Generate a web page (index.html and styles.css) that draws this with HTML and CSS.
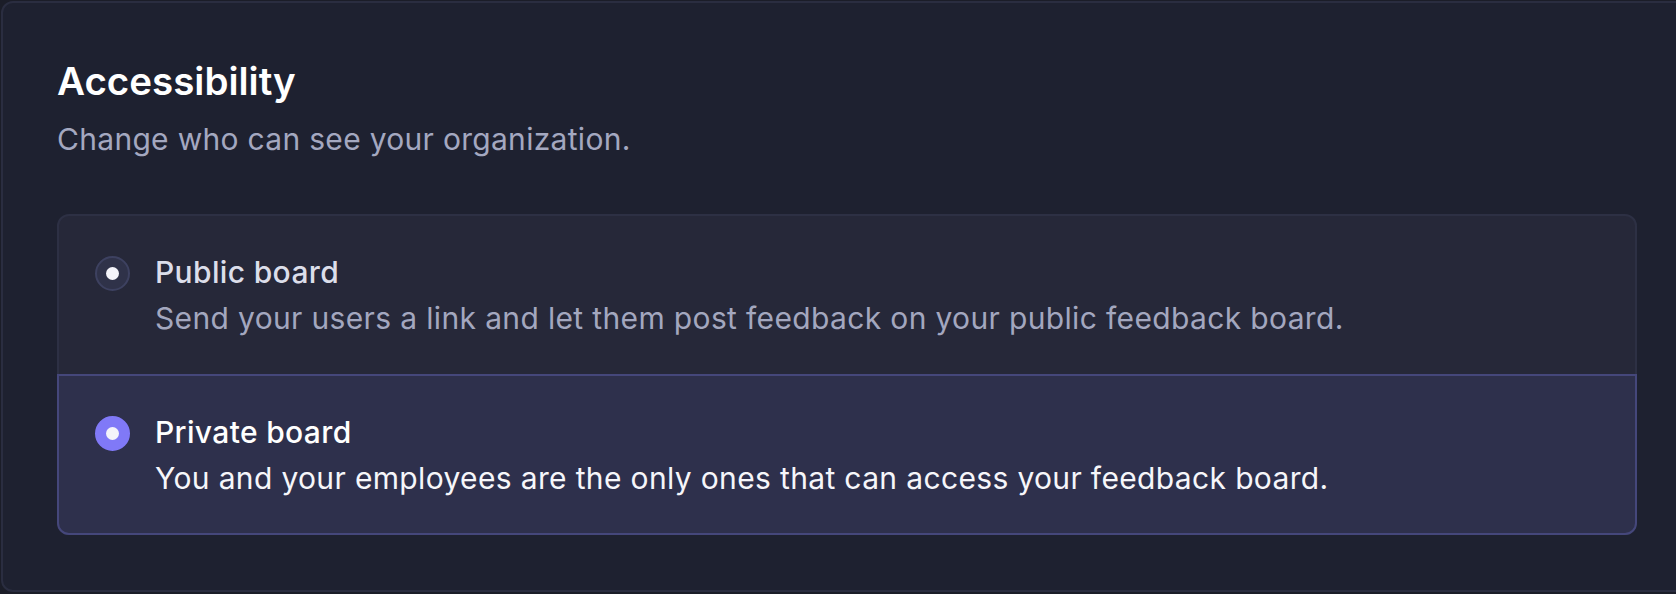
FILE: index.html
```html
<!DOCTYPE html>
<html lang="en">
<head>
<meta charset="utf-8">
<title>Accessibility</title>
<link rel="stylesheet" href="styles.css">
</head>
<body>
<section class="panel">
  <h1 class="title">Accessibility</h1>
  <p class="subtitle">Change who can see your organization.</p>
  <div class="options">
    <label class="option">
      <span class="radio"><span class="dot"></span></span>
      <span class="text">
        <span class="opt-title">Public board</span>
        <span class="opt-desc">Send your users a link and let them post feedback on your public feedback board.</span>
      </span>
    </label>
    <label class="option selected">
      <span class="radio"><span class="dot"></span></span>
      <span class="text">
        <span class="opt-title">Private board</span>
        <span class="opt-desc">You and your employees are the only ones that can access your feedback board.</span>
      </span>
    </label>
  </div>
</section>
</body>
</html>
```
FILE: styles.css
```css
html, body {
  margin: 0;
  padding: 0;
  background: #1b1d28;
  overflow: hidden;
}
body {
  width: 1676px;
  height: 594px;
  padding: 1px 0 0 1px;
  box-sizing: border-box;
  font-family: Inter, "Noto Sans", sans-serif;
}
.panel {
  width: 1688px;
  height: 591px;
  box-sizing: border-box;
  background: #1e2130;
  border: 2px solid #2a2d40;
  border-radius: 12px;
  padding: 54px 54px 0 54px;
}
.title {
  margin: 0;
  font-size: 38.5px;
  line-height: 48px;
  font-weight: 600;
  color: #ffffff;
}
.subtitle {
  margin: 13px 0 0 0;
  font-size: 30px;
  line-height: 42px;
  letter-spacing: 0.3px;
  color: #a4a8c0;
}
.options {
  margin-top: 54px;
  width: 1580px;
  box-sizing: border-box;
  border: 2px solid #2d3044;
  border-radius: 12px;
  background: #262839;
  display: flex;
  flex-direction: column;
}
.option {
  display: flex;
  align-items: flex-start;
  gap: 25px;
  padding: 36px 36px 36px 36px;
}
.option.selected {
  margin: 0 -2px -2px -2px;
  border: 2px solid #45477b;
  border-radius: 0 0 12px 12px;
  background: #2e304c;
  padding-bottom: 35px;
}
.radio {
  flex: none;
  width: 35px;
  height: 35px;
  margin-top: 4px;
  box-sizing: border-box;
  border-radius: 50%;
  border: 2px solid #3d4160;
  background: #2f3249;
  display: flex;
  align-items: center;
  justify-content: center;
}
.selected .radio {
  border-color: #8079f7;
  background: #8079f7;
}
.dot {
  width: 13px;
  height: 13px;
  border-radius: 50%;
  background: #f4f4fa;
}
.text {
  display: flex;
  flex-direction: column;
  gap: 6px;
  letter-spacing: 0.35px;
}
.opt-title {
  font-size: 30px;
  line-height: 40px;
  font-weight: 500;
  color: #dcdeea;
}
.opt-desc {
  font-size: 30px;
  line-height: 40px;
  color: #a3a7bf;
}
.selected .opt-title {
  color: #ffffff;
}
.selected .opt-desc {
  color: #f6f6fa;
}
```
